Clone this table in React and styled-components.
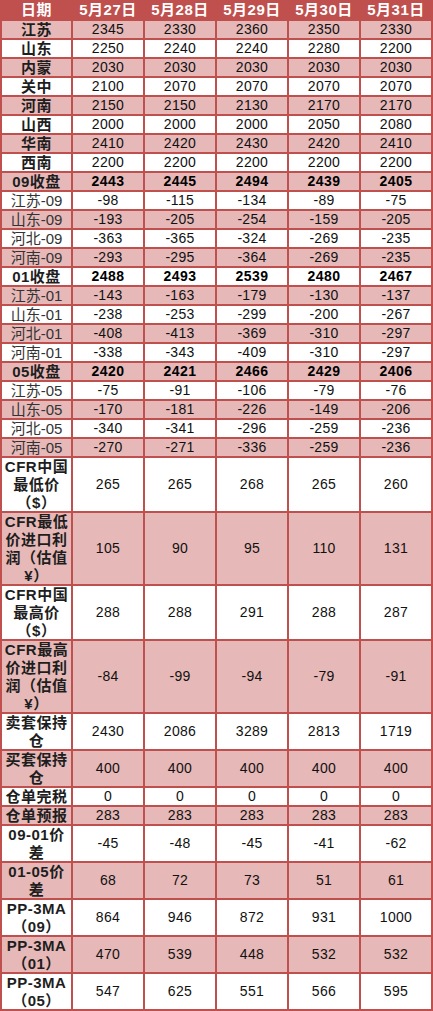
import React from "react";
import styled, { createGlobalStyle, css } from "styled-components";

const Global = createGlobalStyle`
  html, body { margin: 0; padding: 0; background: #ffffff; }
  body { font-family: "Liberation Sans", "Noto Sans CJK SC", sans-serif; }
`;

const RED = "#c0504d";
const PINK = "#e6b8b7";

const Table = styled.div`
  width: 433px;
  box-sizing: border-box;
  background: ${RED};
  display: flex;
  flex-direction: column;
  gap: 2px;
  padding: 0 2px 2px 2px;
`;

const Row = styled.div`
  display: grid;
  grid-template-columns: 69px repeat(5, 70px);
  column-gap: 2px;
`;

const HeadCell = styled.div`
  height: 19px;
  display: flex;
  align-items: center;
  justify-content: center;
  color: #ffffff;
  font-weight: 700;
  font-size: 15px;
  line-height: 17px;
  white-space: nowrap;
  letter-spacing: 0.5px;
`;

const Cell = styled.div`
  height: ${(p) => p.$lines * 18 - 1}px;
  background: ${(p) => (p.$pink ? PINK : "#ffffff")};
  display: flex;
  align-items: center;
  justify-content: center;
  text-align: center;
  white-space: nowrap;
`;

const Label = styled.span`
  font-size: 15px;
  line-height: 18px;
  color: ${(p) => (p.$bold ? "#1e1e1e" : "#333333")};
  font-weight: ${(p) => (p.$bold ? 700 : 400)};
  letter-spacing: ${(p) => (p.$bold ? "0.5px" : "0")};
`;

const Num = styled.span`
  font-size: 14px;
  line-height: 17px;
  color: #111111;
  font-weight: 400;
  letter-spacing: 0.3px;
  ${(p) =>
    p.$bold &&
    css`
      font-weight: 700;
      color: #000000;
      letter-spacing: 0.5px;
    `}
`;

const dates = ["5月27日", "5月28日", "5月29日", "5月30日", "5月31日"];

const rows = [
  { label: ["江苏"], b: true, v: [2345, 2330, 2360, 2350, 2330] },
  { label: ["山东"], b: true, v: [2250, 2240, 2240, 2280, 2200] },
  { label: ["内蒙"], b: true, v: [2030, 2030, 2030, 2030, 2030] },
  { label: ["关中"], b: true, v: [2100, 2070, 2070, 2070, 2070] },
  { label: ["河南"], b: true, v: [2150, 2150, 2130, 2170, 2170] },
  { label: ["山西"], b: true, v: [2000, 2000, 2000, 2050, 2080] },
  { label: ["华南"], b: true, v: [2410, 2420, 2430, 2420, 2410] },
  { label: ["西南"], b: true, v: [2200, 2200, 2200, 2200, 2200] },
  { label: ["09收盘"], b: true, nb: true, v: [2443, 2445, 2494, 2439, 2405] },
  { label: ["江苏-09"], v: [-98, -115, -134, -89, -75] },
  { label: ["山东-09"], v: [-193, -205, -254, -159, -205] },
  { label: ["河北-09"], v: [-363, -365, -324, -269, -235] },
  { label: ["河南-09"], v: [-293, -295, -364, -269, -235] },
  { label: ["01收盘"], b: true, nb: true, v: [2488, 2493, 2539, 2480, 2467] },
  { label: ["江苏-01"], v: [-143, -163, -179, -130, -137] },
  { label: ["山东-01"], v: [-238, -253, -299, -200, -267] },
  { label: ["河北-01"], v: [-408, -413, -369, -310, -297] },
  { label: ["河南-01"], v: [-338, -343, -409, -310, -297] },
  { label: ["05收盘"], b: true, nb: true, v: [2420, 2421, 2466, 2429, 2406] },
  { label: ["江苏-05"], v: [-75, -91, -106, -79, -76] },
  { label: ["山东-05"], v: [-170, -181, -226, -149, -206] },
  { label: ["河北-05"], v: [-340, -341, -296, -259, -236] },
  { label: ["河南-05"], v: [-270, -271, -336, -259, -236] },
  { label: ["CFR中国", "最低价", "（$）"], b: true, v: [265, 265, 268, 265, 260] },
  { label: ["CFR最低", "价进口利", "润（估值", "¥）"], b: true, v: [105, 90, 95, 110, 131] },
  { label: ["CFR中国", "最高价", "（$）"], b: true, v: [288, 288, 291, 288, 287] },
  { label: ["CFR最高", "价进口利", "润（估值", "¥）"], b: true, v: [-84, -99, -94, -79, -91] },
  { label: ["卖套保持", "仓"], b: true, v: [2430, 2086, 3289, 2813, 1719] },
  { label: ["买套保持", "仓"], b: true, v: [400, 400, 400, 400, 400] },
  { label: ["仓单完税"], b: true, v: [0, 0, 0, 0, 0] },
  { label: ["仓单预报"], b: true, v: [283, 283, 283, 283, 283] },
  { label: ["09-01价", "差"], b: true, v: [-45, -48, -45, -41, -62] },
  { label: ["01-05价", "差"], b: true, v: [68, 72, 73, 51, 61] },
  { label: ["PP-3MA", "（09）"], b: true, v: [864, 946, 872, 931, 1000] },
  { label: ["PP-3MA", "（01）"], b: true, v: [470, 539, 448, 532, 532] },
  { label: ["PP-3MA", "（05）"], b: true, v: [547, 625, 551, 566, 595] },
];

export default function App() {
  return (
    <>
      <Global />
      <Table>
        <Row>
          <HeadCell>日期</HeadCell>
          {dates.map((d) => (
            <HeadCell key={d}>{d}</HeadCell>
          ))}
        </Row>
        {rows.map((r, i) => {
          const pink = i % 2 === 0;
          const lines = r.label.length;
          return (
            <Row key={i}>
              <Cell $lines={lines} $pink={pink}>
                <Label $bold={r.b}>
                  {r.label.map((l, j) => (
                    <React.Fragment key={j}>
                      {j > 0 && <br />}
                      {l}
                    </React.Fragment>
                  ))}
                </Label>
              </Cell>
              {r.v.map((v, j) => (
                <Cell key={j} $lines={lines} $pink={pink}>
                  <Num $bold={r.nb}>{v}</Num>
                </Cell>
              ))}
            </Row>
          );
        })}
      </Table>
    </>
  );
}
